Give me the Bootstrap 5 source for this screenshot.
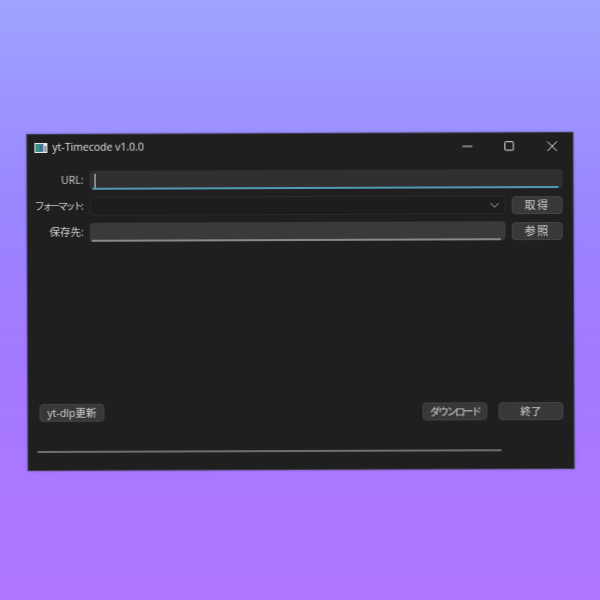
<!DOCTYPE html>
<html lang="ja">
<head>
<meta charset="utf-8">
<title>yt-Timecode v1.0.0</title>
<link href="https://cdn.jsdelivr.net/npm/bootstrap@5.3.0/dist/css/bootstrap.min.css" rel="stylesheet">
<style>
html,body{height:100%;margin:0}
body{background:linear-gradient(180deg,#9fa3ff 0%,#9a85ff 35%,#a47aff 60%,#b077ff 100%);overflow:hidden;font-family:"Liberation Sans","Noto Sans CJK JP",sans-serif}
.stage{height:600px;width:600px;padding-top:2px}
.appwin{width:547px;height:337px;background:#1f1f1f;border:1px solid #3d3a4a;transform:rotate(-.22deg);color:#d8d8d8;font-size:10.5px;font-family:"Open Sans","Noto Sans CJK JP",sans-serif;filter:blur(.35px);box-shadow:0 0 2px rgba(30,20,60,.5)}
.titlebar{height:26px;padding-left:7px;gap:5px;font-size:10.5px;color:#e2e2e2}
.appicon{width:13px;height:10px}
.winctl{width:43px;height:26px}
.fields{padding:10px 10px 0 0}
.lab{width:62px;flex:none;white-space:nowrap;text-align:right;padding-right:6px;color:#d0d0d0}
.fld{height:19px;border-radius:4px;background:#333;position:relative}
.urlbox{background:#303030}
.urlbox::before{content:"";position:absolute;left:5px;top:3px;width:1px;height:14px;background:#ddd}
.urlbox::after{content:"";position:absolute;left:3px;right:4px;bottom:0;height:2px;background:#4f9ab5}
.selbox{background:#1d1d1d;border:1px solid #2a2a2a;padding-right:5px}
.pathbox{background:#3a3a3a}
.pathbox::after{content:"";position:absolute;left:2px;right:5px;bottom:0;height:2px;background:#8a8a8a}
.btnq{background:#383838;border:1px solid #444;color:#d5d5d5;border-radius:4px;font-size:10.5px;padding:0;height:18px;line-height:16px}
.w52{width:51px;margin-left:6px}
.rowgap{gap:7px}
.w65{width:65px}
.dlbtn{margin-right:11px}
.spacer{flex:1}
.kana{letter-spacing:-2.2px}
.kanasm{letter-spacing:-2.3px;font-size:10px}
.kanji{letter-spacing:1.5px;font-size:11px}
.bottomrow{padding:0 10px 0 11px;margin-bottom:29px}
.barline{height:2px;width:464px;background:#6e6e6e;margin:0 0 17px 9px}
</style>
</head>
<body>
<div class="stage d-flex align-items-center justify-content-center">
  <div class="appwin d-flex flex-column">
    <div class="titlebar d-flex align-items-center">
      <svg class="appicon" viewBox="0 0 13 10"><rect width="13" height="10" fill="#e8e8e8"/><rect x="1" y="1" width="8" height="8" fill="#3b8f86"/><rect x="5" y="2" width="4" height="6" fill="#4a6f9c"/><rect x="10" y="3" width="2" height="6" fill="#8a8a8a"/></svg>
      <span class="flex-grow-1">yt-Timecode v1.0.0</span>
      <div class="d-flex">
        <svg class="winctl" viewBox="0 0 43 26"><path d="M19 13h10" stroke="#ddd" fill="none"/></svg>
        <svg class="winctl" viewBox="0 0 43 26"><rect x="18.5" y="8.5" width="8.5" height="8.5" rx="1" stroke="#e2e2e2" fill="none"/></svg>
        <svg class="winctl" viewBox="0 0 43 26"><path d="M18 8.5l9.5 9.5M27.5 8.5L18 18" stroke="#e2e2e2" fill="none"/></svg>
      </div>
    </div>
    <div class="fields d-flex flex-column rowgap">
      <div class="d-flex align-items-center">
        <div class="lab">URL:</div>
        <div class="fld urlbox flex-grow-1"></div>
      </div>
      <div class="d-flex align-items-center">
        <div class="d-flex align-items-center flex-grow-1">
          <div class="lab"><span class="kanasm">フォーマット</span>:</div>
          <div class="fld selbox flex-grow-1 d-flex align-items-center justify-content-end">
            <svg width="10" height="6" viewBox="0 0 10 6"><path d="M1 1l4 4 4-4" stroke="#aaa" fill="none"/></svg>
          </div>
        </div>
        <button type="button" class="btn btnq w52"><span class="kanji">取得</span></button>
      </div>
      <div class="d-flex align-items-center">
        <div class="d-flex align-items-center flex-grow-1">
          <div class="lab">保存先:</div>
          <div class="fld pathbox flex-grow-1"></div>
        </div>
        <button type="button" class="btn btnq w52"><span class="kanji">参照</span></button>
      </div>
    </div>
    <div class="spacer"></div>
    <div class="bottomrow d-flex align-items-center">
      <button type="button" class="btn btnq w65">yt-dlp更新</button>
      <div class="spacer"></div>
      <button type="button" class="btn btnq w65 kana dlbtn">ダウンロード</button>
      <button type="button" class="btn btnq w65">終了</button>
    </div>
    <div class="barline"></div>
  </div>
</div>
<script src="https://cdn.jsdelivr.net/npm/bootstrap@5.3.0/dist/js/bootstrap.bundle.min.js"></script>
</body>
</html>
